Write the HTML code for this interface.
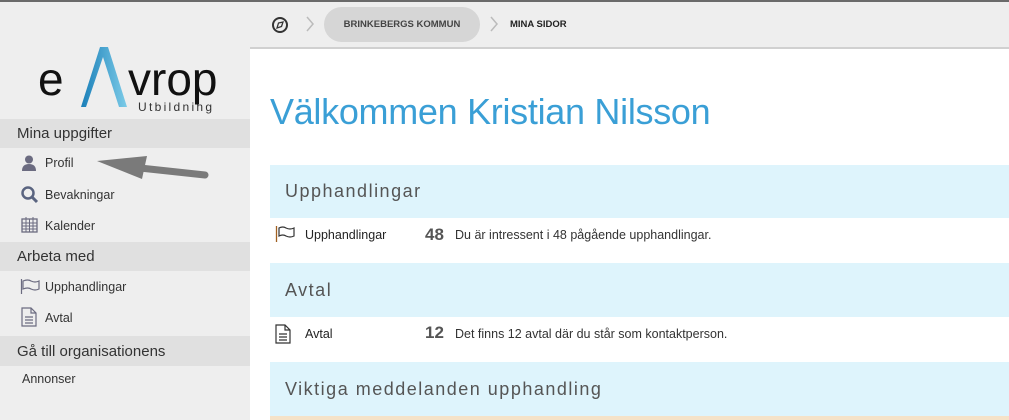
<!DOCTYPE html>
<html><head><style>
*{margin:0;padding:0;box-sizing:border-box}
body{width:1009px;height:420px;overflow:hidden;background:#eee;font-family:"Liberation Sans",sans-serif;position:relative}
.abs{position:absolute}
.topline{left:0;top:0;width:1009px;height:2px;background:#6a6a6a}
.main{left:250px;top:47px;width:759px;height:373px;background:#fff;border-top:2px solid #d0d0d0}
.sh{left:0;width:250px;height:29px;background:#e0e0e0;color:#333;font-size:15px;padding-left:17px;line-height:29px}
.si{left:45px;font-size:12.5px;color:#333}
.band{left:270px;width:739px;background:#def4fc;color:#555;font-size:18px;letter-spacing:1.5px;padding-left:15px}
.row{left:270px;width:739px;font-size:12.5px;color:#222}
</style></head><body>
<div class="abs topline"></div>
<svg class="abs" style="left:271px;top:16px" width="18" height="18" viewBox="0 0 18 18"><circle cx="9" cy="9" r="7" fill="none" stroke="#333" stroke-width="2"/><path d="M6 12 L7.5 7 L12 6 L10.5 10.5 Z" fill="none" stroke="#333" stroke-width="1.3"/></svg>
<svg class="abs" style="left:305px;top:16px" width="10" height="16"><path d="M2 1 L8 8 L2 15" fill="none" stroke="#bbb" stroke-width="1.5"/></svg>
<div class="abs" style="left:324px;top:7px;width:156px;height:35px;border-radius:18px;background:#d6d6d6;font-size:9.5px;font-weight:bold;color:#444;text-align:center;line-height:35px">BRINKEBERGS KOMMUN</div>
<svg class="abs" style="left:489px;top:16px" width="10" height="16"><path d="M2 1 L8 8 L2 15" fill="none" stroke="#bbb" stroke-width="1.5"/></svg>
<div class="abs" style="left:510px;top:19px;font-size:9.5px;font-weight:bold;color:#222">MINA SIDOR</div>
<div class="abs main"></div>
<div class="abs" style="left:38px;top:56px;font-size:46px;color:#111;line-height:46px">e</div>
<div class="abs" style="left:128px;top:56px;font-size:46px;color:#111;line-height:46px">vrop</div>
<svg class="abs" style="left:78px;top:45px" width="50" height="65"><defs><linearGradient id="g" x1="0" x2="1"><stop offset="0" stop-color="#1a7fb8"/><stop offset="1" stop-color="#7ccbe8"/></linearGradient></defs><path d="M3 62 L22 2 L30 2 L49 62 L41 62 L25 12 L8 62Z" fill="url(#g)"/></svg>
<div class="abs" style="left:138px;top:100px;font-size:12px;letter-spacing:2.3px;color:#333">Utbildning</div>
<div class="abs sh" style="top:119px">Mina uppgifter</div>
<svg class="abs" style="left:22px;top:155px" width="14" height="16"><circle cx="7" cy="4.5" r="4" fill="#6b6b80"/><path d="M0 16 Q0 9 7 9 Q14 9 14 16Z" fill="#6b6b80"/></svg>
<div class="abs si" style="top:156px">Profil</div>
<svg class="abs" style="left:95px;top:153px" width="115" height="28"><path d="M110 22 L45 15" stroke="#7a7a7a" stroke-width="7" stroke-linecap="round"/><path d="M2 8 L52 3 L47 26Z" fill="#7a7a7a"/></svg>
<svg class="abs" style="left:21px;top:186px" width="18" height="18"><circle cx="7" cy="7" r="5.5" fill="none" stroke="#5a6480" stroke-width="2.5"/><path d="M11 11 L16 16" stroke="#5a6480" stroke-width="3"/></svg>
<div class="abs si" style="top:188px">Bevakningar</div>
<svg class="abs" style="left:21px;top:216px" width="17" height="17"><rect x="1" y="3" width="15" height="13" fill="none" stroke="#6b6b80" stroke-width="1.3"/><path d="M1 7h15M1 10h15M1 13h15M5 3v13M8.5 3v13M12 3v13M5 1v4M12 1v4" stroke="#6b6b80"/></svg>
<div class="abs si" style="top:219px">Kalender</div>
<div class="abs sh" style="top:242px">Arbeta med</div>
<svg class="abs" style="left:20px;top:278px" width="20" height="16"><path d="M1.5 1v15M3 3 Q8 1 11 3 Q15 5 19 3 L19 11 Q15 13 11 11 Q8 9 3 11Z" fill="none" stroke="#6b6b80" stroke-width="1.2"/></svg>
<div class="abs si" style="top:280px">Upphandlingar</div>
<svg class="abs" style="left:21px;top:307px" width="16" height="20"><path d="M1 1h9l5 5v13H1Z M10 1v5h5 M4 10h8M4 13h8M4 16h8" fill="none" stroke="#6b6b80" stroke-width="1.2"/></svg>
<div class="abs si" style="top:311px">Avtal</div>
<div class="abs sh" style="top:336px;height:30px;line-height:31px">Gå till organisationens</div>
<div class="abs si" style="left:22px;top:372px">Annonser</div>
<div class="abs" style="left:270px;top:91px;font-size:36px;color:#3a9fd6;letter-spacing:-0.3px">Välkommen Kristian Nilsson</div>
<div class="abs band" style="top:165px;height:53px;line-height:53px">Upphandlingar</div>
<svg class="abs" style="left:275px;top:226px" width="20" height="16"><path d="M1.5 0v16" stroke="#a06020" stroke-width="1.3"/><path d="M4 2 Q8 0 11 2 Q15 4 19 2 L19 10 Q15 12 11 10 Q8 8 4 10Z" fill="none" stroke="#333" stroke-width="1.2"/></svg>
<div class="abs row" style="left:305px;top:228px">Upphandlingar</div>
<div class="abs" style="left:425px;top:225px;font-size:17px;font-weight:bold;color:#555">48</div>
<div class="abs row" style="left:455px;top:228px;color:#333">Du är intressent i 48 pågående upphandlingar.</div>
<div class="abs band" style="top:263px;height:54px;line-height:54px">Avtal</div>
<svg class="abs" style="left:275px;top:324px" width="16" height="20"><path d="M1 1h9l5 5v13H1Z M10 1v5h5 M4 10h8M4 13h8M4 16h8" fill="none" stroke="#333" stroke-width="1.2"/></svg>
<div class="abs row" style="left:305px;top:327px">Avtal</div>
<div class="abs" style="left:425px;top:323px;font-size:17px;font-weight:bold;color:#555">12</div>
<div class="abs row" style="left:455px;top:327px;color:#333">Det finns 12 avtal där du står som kontaktperson.</div>
<div class="abs band" style="top:362px;height:54px;line-height:54px">Viktiga meddelanden upphandling</div>
<div class="abs" style="left:270px;top:416px;width:739px;height:4px;background:#f5e2c8"></div>
</body></html>
